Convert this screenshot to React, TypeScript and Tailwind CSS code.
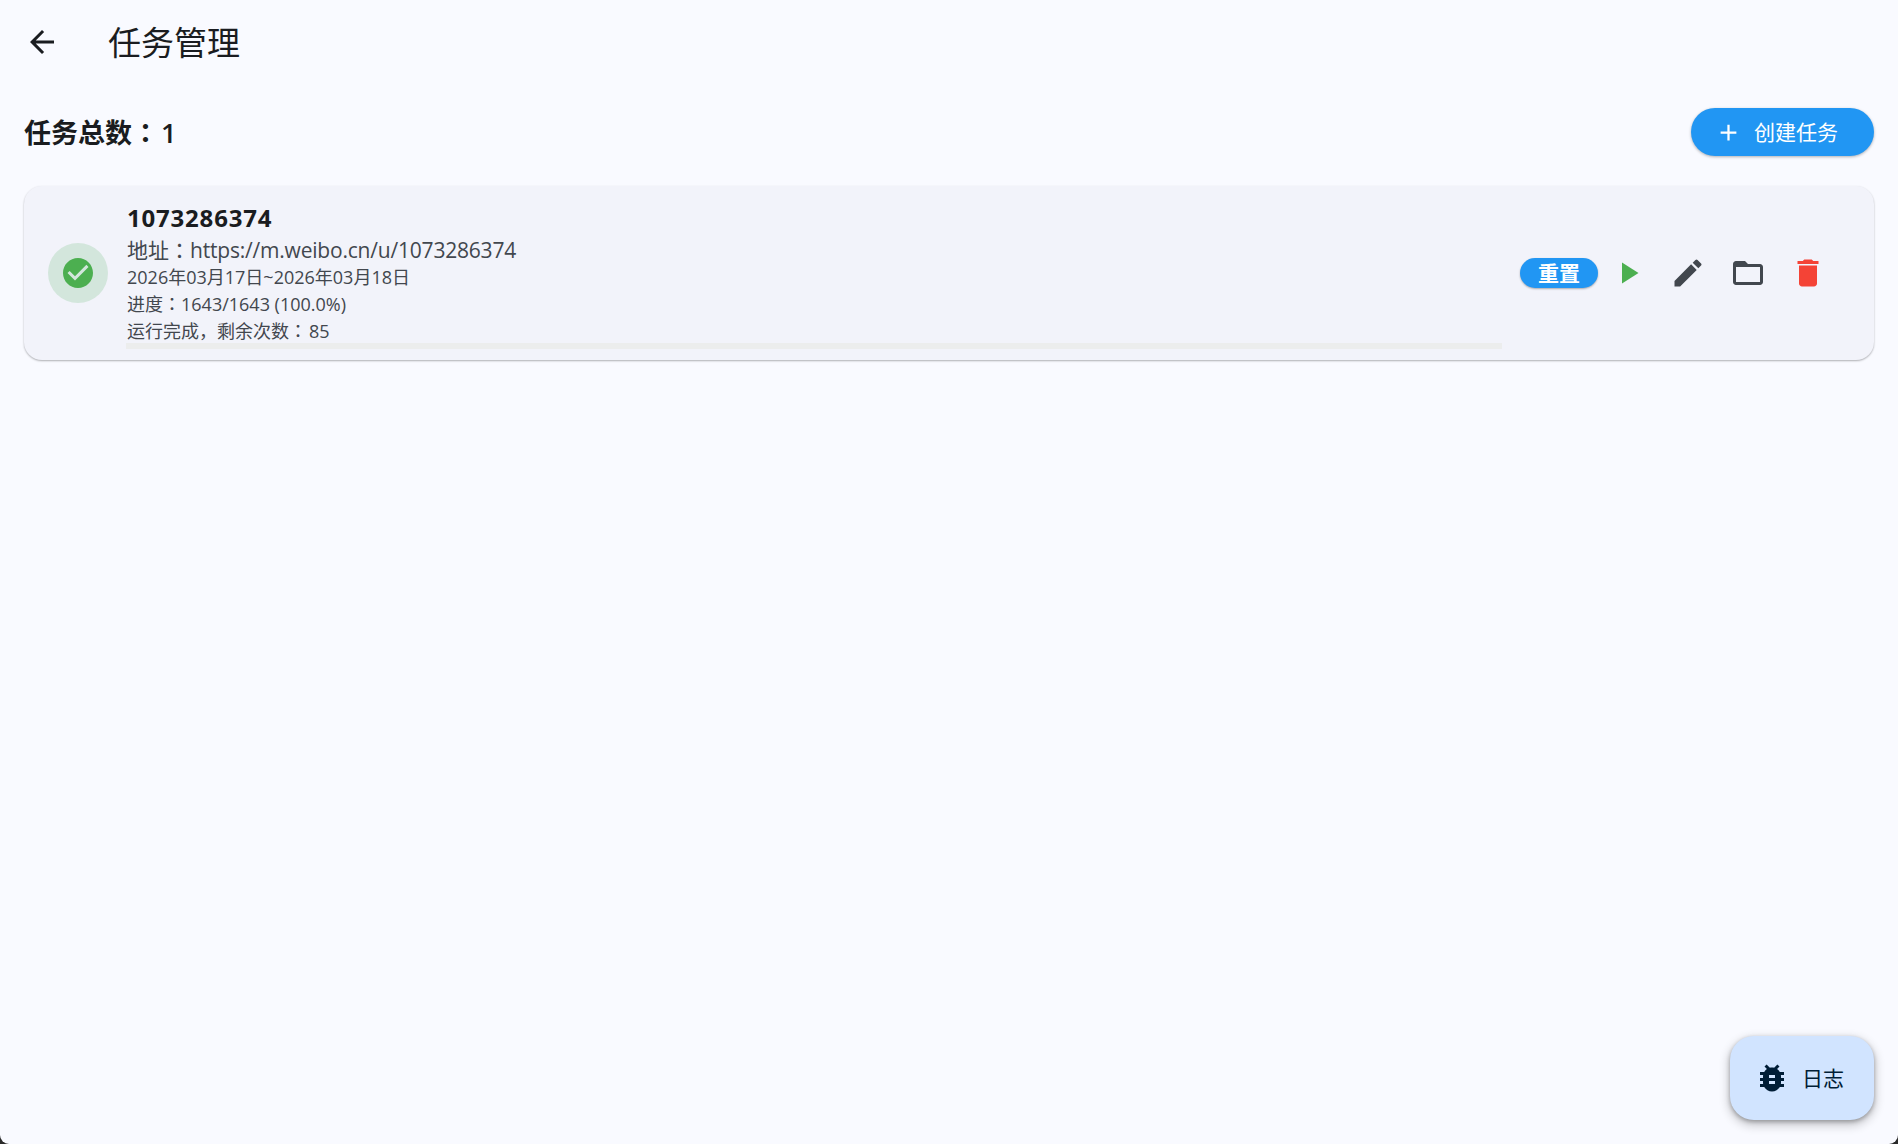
import React from 'react';

const fontStack = '[font-family:"Open_Sans","Noto_Sans_CJK_SC",sans-serif]';

// the fullwidth colon sits centred in the reference, which the JP face does
const Colon = () => <span className='[font-family:"Noto_Sans_CJK_JP",sans-serif]'>：</span>;

const ArrowBackIcon = () => (
  <svg viewBox="0 0 24 24" className="w-[36px] h-[36px] fill-[#1a1c20]">
    <path d="M20 11H7.83l5.59-5.59L12 4l-8 8 8 8 1.41-1.41L7.83 13H20v-2z" />
  </svg>
);

const PlusIcon = () => (
  <svg viewBox="0 0 24 24" className="w-[27px] h-[27px] fill-white">
    <path d="M19 13h-6v6h-2v-6H5v-2h6V5h2v6h6v2z" />
  </svg>
);

const PlayIcon = () => (
  <svg viewBox="0 0 24 24" className="w-[36px] h-[36px] fill-[#4caf50]">
    <path d="M8 5v14l11-7z" />
  </svg>
);

const EditIcon = () => (
  <svg viewBox="0 0 24 24" className="w-[36px] h-[36px] fill-[#42474e]">
    <path d="M3 17.25V21h3.75L17.81 9.94l-3.75-3.75L3 17.25zM20.71 7.04c.39-.39.39-1.02 0-1.41l-2.34-2.34a.996.996 0 0 0-1.41 0l-1.83 1.83 3.75 3.75 1.83-1.83z" />
  </svg>
);

const FolderIcon = () => (
  <svg viewBox="0 0 24 24" className="w-[36px] h-[36px] fill-[#42474e]">
    <path d="M20 6h-8l-2-2H4c-1.1 0-1.99.9-1.99 2L2 18c0 1.1.9 2 2 2h16c1.1 0 2-.9 2-2V8c0-1.1-.9-2-2-2zm0 12H4V8h16v10z" />
  </svg>
);

const DeleteIcon = () => (
  <svg viewBox="0 0 24 24" className="w-[36px] h-[36px] fill-[#f44336]">
    <path d="M6 19c0 1.1.9 2 2 2h8c1.1 0 2-.9 2-2V7H6v12zM19 4h-3.5l-1-1h-5l-1 1H5v2h14V4z" />
  </svg>
);

const CheckCircleIcon = () => (
  <svg viewBox="0 0 24 24" className="w-[36px] h-[36px] fill-[#4caf50]">
    <path d="M12 2C6.48 2 2 6.48 2 12s4.48 10 10 10 10-4.48 10-10S17.52 2 12 2zm-2 15-5-5 1.41-1.41L10 14.17l7.59-7.59L19 8l-9 9z" />
  </svg>
);

const BugIcon = () => (
  <svg viewBox="0 0 24 24" className="w-[36px] h-[36px] fill-[#001d36]">
    <path d="M20 8h-2.81c-.45-.78-1.07-1.45-1.82-1.96L17 4.41 15.59 3l-2.17 2.17C12.96 5.06 12.49 5 12 5c-.49 0-.96.06-1.41.17L8.41 3 7 4.41l1.62 1.63C7.88 6.55 7.26 7.22 6.81 8H4v2h2.09c-.05.33-.09.66-.09 1v1H4v2h2v1c0 .34.04.67.09 1H4v2h2.81c1.04 1.79 2.97 3 5.19 3s4.15-1.21 5.19-3H20v-2h-2.09c.05-.33.09-.66.09-1v-1h2v-2h-2v-1c0-.34-.04-.67-.09-1H20V8zm-6 8h-4v-2h4v2zm0-4h-4v-2h4v2z" />
  </svg>
);

export default function App() {
  return (
    <div className={`h-screen bg-[#2a2a2a] ${fontStack}`}>
      <div className="h-full flex flex-col bg-[#f9faff] rounded-b-[9px] overflow-hidden">
        <header className="h-[84px] flex items-center shrink-0 pl-[24px]">
          <ArrowBackIcon />
          <h1 className="ml-[48px] text-[33px] font-normal leading-none text-[#1a1c20]">任务管理</h1>
        </header>

        <div className="flex-1 flex flex-col px-[24px] min-h-0">
          <div className="flex items-center justify-between h-[48px] mt-[24px]">
            <div className="text-[27px] font-semibold text-[#1a1c20] leading-none">
              任务总数<Colon /><span className="ml-[2px]">1</span>
            </div>
            <button className="h-[48px] w-[183px] rounded-full bg-[#2196f3] text-white flex items-center pl-[24px] shadow-[0_1px_3px_rgba(0,0,0,0.3)]">
              <PlusIcon />
              <span className="ml-[12px] text-[21px] leading-none">创建任务</span>
            </button>
          </div>

          <div className="mt-[30px] h-[174px] rounded-[18px] bg-[#f2f3fa] shadow-[0_1px_2px_rgba(0,0,0,0.3)] flex items-center pl-[24px] pr-[24px]">
            <div className="w-[60px] h-[60px] rounded-full bg-[#d3e6dc] flex items-center justify-center shrink-0">
              <CheckCircleIcon />
            </div>
            <div className="ml-[18px] w-[1376px] shrink-0 self-stretch flex flex-col pt-[15px] text-[#42474e]">
              <div className="pl-[1px]">
                <div className="text-[24px] font-bold leading-[34px] tracking-[0.8px] text-[#1a1c20]">1073286374</div>
                <div className="text-[21px] leading-[28px]">
                  地址<Colon /><span className="tracking-[-0.2px]">https://m.weibo.cn/u/1073286374</span>
                </div>
                <div className="text-[18px] leading-[26px]">2026年03月17日~2026年03月18日</div>
                <div className="text-[18px] leading-[26px]">
                  进度<Colon />1643/1643 (100.0%)
                </div>
                <div className="text-[18px] leading-[26px]">
                  运行完成，剩余次数<Colon /><span className="ml-[2px]">85</span>
                </div>
              </div>
              <div className="h-[6px] bg-[#eceded] -mt-[1px]" />
            </div>
            <div className="ml-[18px] flex items-center">
              <button className="w-[78px] h-[30px] rounded-[15px] bg-[#2196f3] text-white text-[21px] font-bold leading-none flex items-center justify-center shadow-[0_1px_2px_rgba(0,0,0,0.3)]">
                重置
              </button>
              <div className="ml-[12px] flex items-center gap-[24px]">
                <PlayIcon />
                <EditIcon />
                <FolderIcon />
                <DeleteIcon />
              </div>
            </div>
          </div>

          <div className="flex-1 flex items-end justify-end pb-[24px]">
            <button className="w-[144px] h-[84px] rounded-[24px] bg-[#d1e4ff] text-[#001d36] flex items-center pl-[24px] shadow-[0_4px_9px_3px_rgba(0,0,0,0.15),0_2px_4px_rgba(0,0,0,0.3)]">
              <BugIcon />
              <span className="ml-[12px] text-[21px] leading-none">日志</span>
            </button>
          </div>
        </div>
      </div>
    </div>
  );
}
